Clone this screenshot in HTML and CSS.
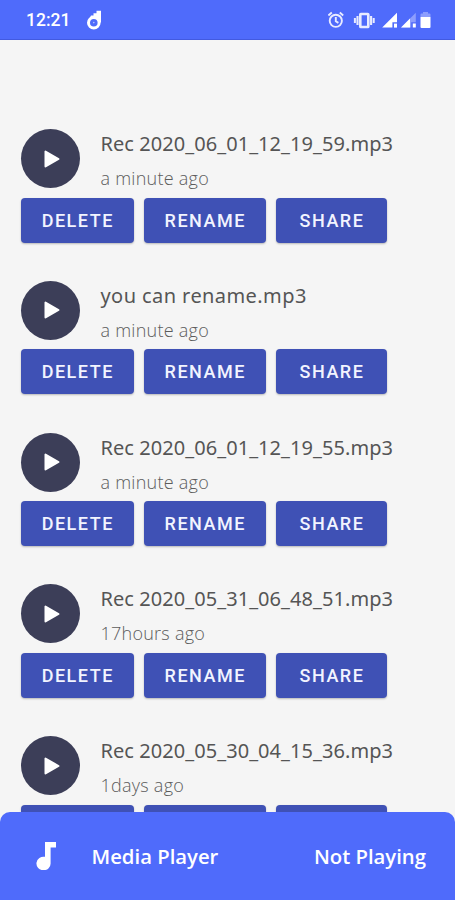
FILE: index.html
```html
<!DOCTYPE html>
<html lang="en">
<head>
    <meta charset="UTF-8">
    <meta name="viewport" content="width=device-width, initial-scale=1.0">
    <title>Recordings</title>
    <link rel="stylesheet" href="styles.css">
</head>
<body>
    <div class="screen">
        <header class="status-bar">
            <span class="clock">12:21</span>
            <svg class="app-icon" width="16" height="20" viewBox="0 0 16 20">
                <path d="M3 9.5 5 5.5h2.5V3.2h3V.8H15V13l-4-4z" fill="#fff"/>
                <circle cx="7.8" cy="12.8" r="5.3" fill="#4f6bfb" stroke="#fff" stroke-width="3"/>
                <circle cx="7.8" cy="12.6" r=".8" fill="#b9c4ff"/>
            </svg>
            <div class="status-icons">
                <svg width="98" height="20" viewBox="0 0 98 20">
                    <g fill="none" stroke="#e8ebff" stroke-width="1.9">
                        <circle cx="7.8" cy="10.8" r="6.1"/>
                        <path d="M7.8 7v4.2l2.6 1.7M.4 5.4l3.4-2.8M15.2 5.4l-3.4-2.8"/>
                        <rect x="32.3" y="4" width="8" height="13" rx=".6" stroke-width="2.6"/>
                        <path d="M29.5 6v9M43.1 6v9" stroke-width="2.1"/>
                        <path d="M26.9 8v5M45.7 8v5" stroke-width="2"/>
                    </g>
                    <path d="M54.2 17.6 69 2.8v9.4h-4.6v5.4z" fill="#fff"/>
                    <path d="M66 13.6h3v4h-3z" fill="#fff"/>
                    <path d="M73 17.6 87.8 2.8v9.4h-4.6v5.4z" fill="#8c9dfd"/>
                    <path d="M73 17.6 82 8.6v9zM84.8 13.6h3v4h-3z" fill="#fff"/>
                </svg>
                <svg class="battery" width="11" height="18" viewBox="0 0 11 18">
                    <path d="M.5 6V3.6q0-1 1-1H3V1h5v1.6h1.5q1 0 1 1V6z" fill="#8c9dfd"/>
                    <path d="M.5 6h10v10q0 1-1 1h-8q-1 0-1-1z" fill="#fff"/>
                </svg>
            </div>
        </header>

        <main class="recordings">
            <article class="recording">
                <div class="info">
                    <div class="play"><svg width="16" height="18" viewBox="0 0 16 18"><path d="M1.5 1.5v15L14.5 9z"/></svg></div>
                    <div class="text">
                        <h2 class="name">Rec 2020_06_01_12_19_59.mp3</h2>
                        <p class="time">a minute ago</p>
                    </div>
                </div>
                <div class="actions">
                    <button class="btn">DELETE</button>
                    <button class="btn">RENAME</button>
                    <button class="btn">SHARE</button>
                </div>
            </article>

            <article class="recording">
                <div class="info">
                    <div class="play"><svg width="16" height="18" viewBox="0 0 16 18"><path d="M1.5 1.5v15L14.5 9z"/></svg></div>
                    <div class="text">
                        <h2 class="name renamed">you can rename.mp3</h2>
                        <p class="time">a minute ago</p>
                    </div>
                </div>
                <div class="actions">
                    <button class="btn">DELETE</button>
                    <button class="btn">RENAME</button>
                    <button class="btn">SHARE</button>
                </div>
            </article>

            <article class="recording">
                <div class="info">
                    <div class="play"><svg width="16" height="18" viewBox="0 0 16 18"><path d="M1.5 1.5v15L14.5 9z"/></svg></div>
                    <div class="text">
                        <h2 class="name">Rec 2020_06_01_12_19_55.mp3</h2>
                        <p class="time">a minute ago</p>
                    </div>
                </div>
                <div class="actions">
                    <button class="btn">DELETE</button>
                    <button class="btn">RENAME</button>
                    <button class="btn">SHARE</button>
                </div>
            </article>

            <article class="recording">
                <div class="info">
                    <div class="play"><svg width="16" height="18" viewBox="0 0 16 18"><path d="M1.5 1.5v15L14.5 9z"/></svg></div>
                    <div class="text">
                        <h2 class="name">Rec 2020_05_31_06_48_51.mp3</h2>
                        <p class="time">17hours ago</p>
                    </div>
                </div>
                <div class="actions">
                    <button class="btn">DELETE</button>
                    <button class="btn">RENAME</button>
                    <button class="btn">SHARE</button>
                </div>
            </article>

            <article class="recording">
                <div class="info">
                    <div class="play"><svg width="16" height="18" viewBox="0 0 16 18"><path d="M1.5 1.5v15L14.5 9z"/></svg></div>
                    <div class="text">
                        <h2 class="name">Rec 2020_05_30_04_15_36.mp3</h2>
                        <p class="time">1days ago</p>
                    </div>
                </div>
                <div class="actions">
                    <button class="btn" aria-label="Delete"></button>
                    <button class="btn" aria-label="Rename"></button>
                    <button class="btn" aria-label="Share"></button>
                </div>
            </article>
        </main>

        <footer class="player">
            <svg class="note" width="20" height="28" viewBox="0 0 20 28">
                <path d="M9 0h11v5.6h-5.4V21A7.1 6.8 0 1 1 9 14.8z" fill="#fff"/>
            </svg>
            <span class="player-title">Media Player</span>
            <span class="player-state">Not Playing</span>
        </footer>
    </div>
</body>
</html>
```
FILE: styles.css
```css
* { box-sizing: border-box; }
body { margin: 0; background: #f5f5f5; font-family: 'Open Sans', 'Noto Sans', sans-serif; }
.screen { display: flex; flex-direction: column; height: 900px; overflow: hidden; }

.status-bar { display: flex; align-items: center; flex: none; height: 40px; padding: 1px 24px 0 26px; background: #4f6bfb; border-bottom: 1px solid #425ae0; color: #fff; }
.clock { width: 60px; font: 500 17.5px/20px Roboto, sans-serif; }
.app-icon { display: block; }
.status-icons { display: flex; align-items: center; margin-left: auto; }
.status-icons svg { display: block; }
.status-icons .battery { margin-left: -6px; }

.recordings { flex: 1; min-height: 0; padding: 89px 21px 0; overflow: hidden; }
.recording { height: 151.75px; }
.info { display: flex; gap: 20.5px; height: 68.5px; }
.play { display: flex; align-items: center; justify-content: center; flex: none; width: 59px; height: 59px; border-radius: 50%; background: #3c3e58; }
.play svg { margin-left: 2px; }
.play path { fill: #fff; stroke: #fff; stroke-width: 2; stroke-linejoin: round; }
.name { margin: 0; font-family: 'Noto Sans', 'Open Sans', sans-serif; font-size: 20px; font-weight: 400; line-height: 30px; letter-spacing: .06px; color: #555; white-space: nowrap; }
.name.renamed { letter-spacing: .42px; }
.time { margin: 5px 0 0; font-size: 18px; font-weight: 300; line-height: 28px; letter-spacing: .25px; color: #5c5c5c; white-space: nowrap; }

.actions { display: grid; grid-template-columns: 112.5px 121.5px 111px; gap: 10.5px; }
.btn { height: 45px; padding: 1px 0 0 1px; border: none; border-radius: 4px; background: #3f51b5; box-shadow: 0 1px 2px rgba(0, 0, 0, .25); color: #f2f4ff; font: 500 18px/44px Roboto, sans-serif; letter-spacing: 1.5px; }

.player { display: flex; align-items: center; flex: none; height: 88px; padding: 0 29px 0 36px; border-radius: 10px 10px 0 0; background: #4f6bfb; color: #fff; font-size: 20.3px; font-weight: 600; }
.player-title { margin-left: 35.5px; }
.player-state { margin-left: auto; }
```
